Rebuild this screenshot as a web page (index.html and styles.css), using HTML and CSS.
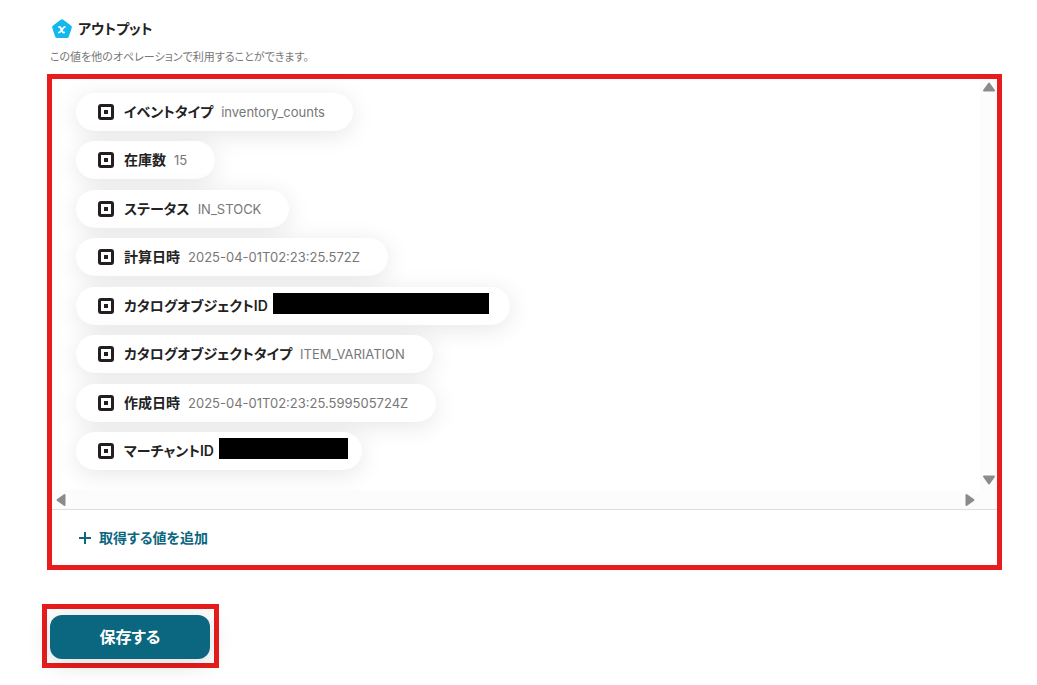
FILE: index.html
```html
<!DOCTYPE html>
<html lang="ja">

<head>
    <meta charset="UTF-8">
    <meta name="viewport" content="width=device-width, initial-scale=1.0">
    <title>アウトプット</title>
    <link rel="stylesheet" href="styles.css">
</head>

<body>
    <svg class="defs" width="0" height="0" aria-hidden="true">
        <symbol id="value-icon" viewBox="0 0 16 16">
            <rect x="1.5" y="1.5" width="13" height="13" rx="1.5" fill="none" stroke="#231f20" stroke-width="3"/>
            <rect x="6" y="6" width="4" height="4" fill="#231f20"/>
        </symbol>
    </svg>
    <main class="container">
        <h2 class="title">
            <svg class="title-icon" viewBox="0 0 20 20" aria-hidden="true">
                <path d="M10 2.6 L17.6 8.2 L14.8 16.8 H5.2 L2.4 8.2 Z" fill="#13b9ee" stroke="#13b9ee" stroke-width="4.4" stroke-linejoin="round"/>
                <path d="M7 8 C9.4 6.9 9.4 14.5 12.2 13.5 M12.9 7.9 C10.8 8 9.2 13.6 6.7 13.5" fill="none" stroke="#fff" stroke-width="1.7" stroke-linecap="round"/>
            </svg>
            アウトプット
        </h2>
        <p class="description">この値を他のオペレーションで利用することができます。</p>

        <section class="output-box">
            <div class="scroll-area">
                <ul class="values">
                    <li class="pill"><svg class="pill-icon"><use href="#value-icon"/></svg><span class="name">イベントタイプ</span><span class="value">inventory_counts</span></li>
                    <li class="pill"><svg class="pill-icon"><use href="#value-icon"/></svg><span class="name">在庫数</span><span class="value">15</span></li>
                    <li class="pill"><svg class="pill-icon"><use href="#value-icon"/></svg><span class="name">ステータス</span><span class="value">IN_STOCK</span></li>
                    <li class="pill"><svg class="pill-icon"><use href="#value-icon"/></svg><span class="name">計算日時</span><span class="value">2025-04-01T02:23:25.572Z</span></li>
                    <li class="pill masked"><svg class="pill-icon"><use href="#value-icon"/></svg><span class="name">カタログオブジェクトID</span><span class="mask mask-long"></span></li>
                    <li class="pill"><svg class="pill-icon"><use href="#value-icon"/></svg><span class="name">カタログオブジェクトタイプ</span><span class="value">ITEM_VARIATION</span></li>
                    <li class="pill"><svg class="pill-icon"><use href="#value-icon"/></svg><span class="name">作成日時</span><span class="value">2025-04-01T02:23:25.599505724Z</span></li>
                    <li class="pill masked"><svg class="pill-icon"><use href="#value-icon"/></svg><span class="name">マーチャントID</span><span class="mask mask-short"></span></li>
                </ul>
                <div class="track track-y">
                    <svg class="arrow" viewBox="0 0 14 10"><path d="M7 1.5 L12 8.5 H2 Z"/></svg>
                    <svg class="arrow" viewBox="0 0 14 10"><path d="M7 8.5 L12 1.5 H2 Z"/></svg>
                </div>
                <div class="track track-x">
                    <svg class="arrow-side" viewBox="0 0 10 14"><path d="M1.5 7 L8.5 2 V12 Z"/></svg>
                    <svg class="arrow-side" viewBox="0 0 10 14"><path d="M8.5 7 L1.5 2 V12 Z"/></svg>
                </div>
            </div>
            <button type="button" class="add-button">
                <svg class="plus" viewBox="0 0 14 14" aria-hidden="true"><path d="M7 1 V13 M1 7 H13"/></svg>
                <span>取得する値を追加</span>
            </button>
        </section>

        <div class="save-frame">
            <button type="submit" class="save-button">保存する</button>
        </div>
    </main>
</body>

</html>
```
FILE: styles.css
```css
* {
    box-sizing: border-box;
}

body {
    margin: 0;
    background-color: #fff;
    color: #222;
    font-family: Inter, "Noto Sans CJK JP", sans-serif;
    font-feature-settings: "palt";
}

.defs {
    position: absolute;
}

.container {
    padding: 18px 35px 16px 42px;
}

.title {
    display: flex;
    align-items: center;
    gap: 6px;
    margin: 0 0 0 10px;
    font-size: 14px;
    line-height: 22px;
    font-weight: 600;
}

.title-icon {
    width: 20px;
    height: 20px;
}

.description {
    margin: 9px 8px 8px;
    font-size: 11px;
    line-height: 17px;
    color: #777;
}

.output-box {
    margin-left: 5px;
    border: 5px solid #e81c1c;
}

.scroll-area {
    display: grid;
    grid-template-columns: 1fr 17px;
    grid-template-rows: 1fr 19px;
    height: 431px;
    overflow: hidden;
    border-bottom: 1px solid #ddd;
}

.values {
    display: flex;
    flex-direction: column;
    justify-content: space-between;
    align-items: flex-start;
    margin: 0;
    padding: 14px 24px 20px;
    list-style: none;
    overflow: hidden;
}

.pill {
    display: flex;
    align-items: center;
    height: 38px;
    padding: 0 28px 0 22px;
    border-radius: 20px;
    background-color: #fff;
    box-shadow: 0 4px 24px rgba(0,0,0,0.1);
    white-space: nowrap;
}

.pill-icon {
    width: 16px;
    height: 16px;
    margin-right: 10px;
}

.name {
    padding-bottom: 2px;
    font-size: 14px;
    font-weight: 600;
}

.value {
    margin-left: 8px;
    font-size: 13px;
    color: #777;
}

.masked {
    padding-right: 14px;
}

.mask {
    height: 21px;
    margin: 0 0 4px 5px;
    background-color: #000;
}

.mask-long {
    width: 216px;
    margin-right: 7px;
}

.mask-short {
    width: 129px;
}

.track {
    display: flex;
    justify-content: space-between;
    align-items: center;
    background-color: #fcfcfc;
    fill: #8b8b8b;
    stroke: #8b8b8b;
    stroke-width: 2;
    stroke-linejoin: round;
}

.track-y {
    flex-direction: column;
    padding: 3px 0 5px;
}

.track-x {
    grid-column: 1 / 3;
    padding: 0 22px 0 4px;
}

.arrow {
    width: 14px;
    height: 10px;
}

.arrow-side {
    width: 10px;
    height: 14px;
}

.add-button {
    display: flex;
    align-items: center;
    gap: 7px;
    height: 55px;
    padding: 0 26px;
    border: none;
    background: none;
    color: #0b6780;
    font: inherit;
    font-size: 14px;
    font-weight: 600;
    cursor: pointer;
}

.add-button span {
    padding-bottom: 2px;
}

.plus {
    width: 14px;
    height: 14px;
    stroke: #0b6780;
    stroke-width: 2;
}

.save-frame {
    width: fit-content;
    margin-top: 34px;
    padding: 6px 4px 4px 3px;
    border: 5px solid #e81c1c;
}

.save-button {
    display: block;
    width: 160px;
    height: 44px;
    padding: 0 0 2px;
    border: none;
    border-radius: 12px;
    background-color: #0b6780;
    box-shadow: 0 4px 24px rgba(0,0,0,0.15);
    color: #fff;
    font: inherit;
    font-size: 16px;
    font-weight: 600;
    cursor: pointer;
}
```
